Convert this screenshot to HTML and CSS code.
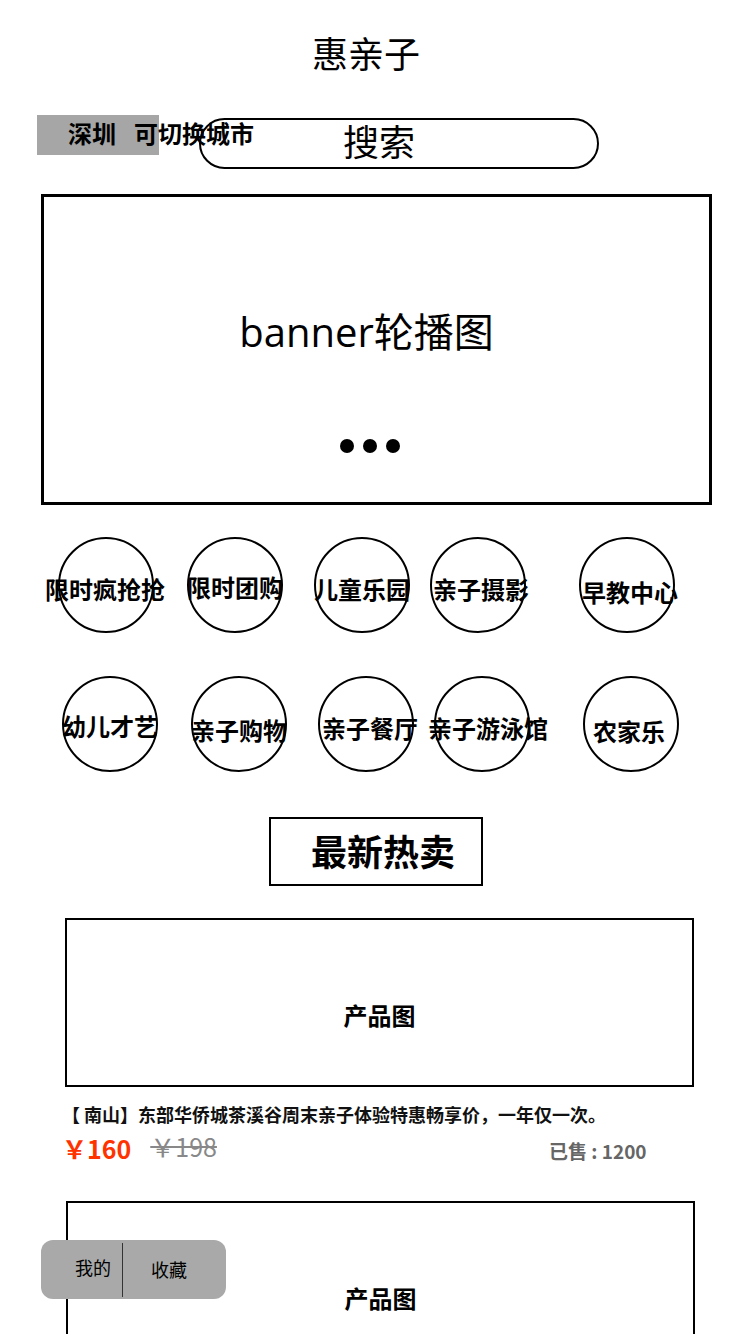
FILE: index.html
```html
<!DOCTYPE html>
<html lang="zh-CN">
<head>
<meta charset="utf-8">
<title>惠亲子</title>
<link rel="stylesheet" href="styles.css">
</head>
<body>
<div class="page">
  <header class="header">
    <h1 class="title">惠亲子</h1>
  </header>

  <div class="search-row">
    <div class="city"><span class="city-name">深圳</span><span class="city-switch">可切换城市</span></div>
    <div class="search">搜索</div>
  </div>

  <section class="banner">
    <div class="banner-text">banner轮播图</div>
    <div class="dots"><span class="dot"></span><span class="dot"></span><span class="dot"></span></div>
  </section>

  <nav class="cats">
    <div class="cat-row row1">
      <div class="cat"><span>限时疯抢抢</span></div>
      <div class="cat"><span>限时团购</span></div>
      <div class="cat"><span>儿童乐园</span></div>
      <div class="cat"><span>亲子摄影</span></div>
      <div class="cat"><span>早教中心</span></div>
    </div>
    <div class="cat-row row2">
      <div class="cat"><span>幼儿才艺</span></div>
      <div class="cat"><span>亲子购物</span></div>
      <div class="cat"><span>亲子餐厅</span></div>
      <div class="cat"><span>亲子游泳馆</span></div>
      <div class="cat"><span>农家乐</span></div>
    </div>
  </nav>

  <div class="hot-wrap">
    <div class="hot">最新热卖</div>
  </div>

  <article class="product first">
    <div class="product-img">产品图</div>
    <div class="product-title">【 南山】东部华侨城茶溪谷周末亲子体验特惠畅享价，一年仅一次。</div>
    <div class="price-row">
      <span class="price">￥160</span>
      <span class="old-price">￥198</span>
      <span class="sold">已售 : 1200</span>
    </div>
  </article>

  <article class="product second">
    <div class="product-img">产品图</div>
  </article>
</div>

<div class="float-bar">
  <div class="fb-item fb-mine">我的</div>
  <div class="fb-divider"></div>
  <div class="fb-item fb-fav">收藏</div>
</div>
</body>
</html>
```

FILE: styles.css
```css
* { box-sizing: border-box; }

html, body {
  margin: 0;
  padding: 0;
  background: #fff;
}

body {
  font-family: "Noto Sans CJK SC", "Noto Sans", sans-serif;
  color: #000;
  width: 750px;
  overflow: hidden;
}

.page {
  width: 750px;
}

/* header */
.header {
  padding-top: 27px;
  padding-right: 18px;
  text-align: center;
}
.title {
  margin: 0;
  font-size: 36px;
  font-weight: 400;
  line-height: 50px;
}

/* search row */
.search-row {
  margin-top: 38px;
  display: flex;
  align-items: flex-start;
  padding-left: 37px;
}
.city {
  position: relative;
  z-index: 2;
  width: 122px;
  height: 40px;
  background: #a6a6a6;
  padding-left: 31px;
  font-size: 24px;
  font-weight: 700;
  line-height: 36px;
  white-space: nowrap;
  overflow: visible;
}
.city-switch {
  margin-left: 18px;
}
.search {
  margin-left: 40px;
  margin-top: 3px;
  width: 400px;
  height: 51px;
  border: 2px solid #000;
  border-radius: 26px;
  font-size: 36px;
  line-height: 40px;
  text-align: center;
  padding-right: 40px;
}

/* banner */
.banner {
  margin: 25px 0 0 41px;
  width: 671px;
  height: 311px;
  border: 3px solid #000;
  display: flex;
  flex-direction: column;
  align-items: center;
  padding-top: 107px;
}
.banner-text {
  font-size: 40px;
  line-height: 56px;
  padding-right: 20px;
  font-family: "Open Sans", "Noto Sans CJK SC", sans-serif;
}
.dots {
  margin-top: 79px;
  display: flex;
  gap: 9px;
  padding-right: 13px;
}
.dot {
  width: 14px;
  height: 14px;
  border-radius: 50%;
  background: #000;
}

/* categories */
.cats {
  margin-top: 32px;
  display: flex;
  flex-direction: column;
  gap: 43px;
}
.cat-row {
  display: flex;
}
.row1 { padding-left: 58px; }
.row2 { padding-left: 62px; }
.cat {
  width: 96px;
  height: 96px;
  border: 2px solid #000;
  border-radius: 50%;
  display: flex;
  align-items: center;
  justify-content: center;
  padding-top: 6px;
  font-size: 24px;
  font-weight: 700;
  white-space: nowrap;
}
.cat:nth-child(2) { margin-left: 33px; }
.cat:nth-child(3) { margin-left: 31px; }
.cat:nth-child(4) { margin-left: 20px; }
.cat:nth-child(5) { margin-left: 53px; padding-top: 12px; }
.row1 .cat:nth-child(1) span { margin-left: -2px; }
.row1 .cat:nth-child(2) { padding-top: 2px; }
.row2 .cat:nth-child(1) { padding-top: 3px; }
.row2 .cat:nth-child(2) { padding-top: 10px; }
.row2 .cat:nth-child(4) span { margin-left: 12px; }
.row2 .cat:nth-child(5) span { margin-left: -4px; }
.row1 .cat:nth-child(4) span,
.row1 .cat:nth-child(5) span { margin-left: 6px; }
.row2 .cat:nth-child(3) span { margin-left: 8px; }

/* hot title */
.hot-wrap {
  margin-top: 45px;
  padding-left: 269px;
}
.hot {
  width: 214px;
  height: 69px;
  border: 2px solid #000;
  font-size: 36px;
  font-weight: 700;
  line-height: 63px;
  text-align: center;
  padding-left: 14px;
}

/* products */
.product.first {
  margin-top: 32px;
  padding-left: 62px;
}
.product.second {
  margin-top: 35px;
  padding-left: 66px;
}
.product-img {
  width: 629px;
  height: 169px;
  border: 2px solid #000;
  font-size: 24px;
  font-weight: 700;
  line-height: 34px;
  text-align: center;
  padding-top: 78px;
}
.first .product-img {
  margin-left: 3px;
}
.product-title {
  margin-top: 14px;
  font-size: 18px;
  font-weight: 700;
  line-height: 26px;
  color: #111;
  white-space: nowrap;
}
.price-row {
  margin-top: 3px;
  display: flex;
  align-items: center;
  height: 36px;
  padding-left: 0;
}
.price {
  color: #ff3300;
  font-size: 25px;
  font-weight: 700;
  line-height: 36px;
}
.old-price {
  margin-left: 19px;
  margin-top: -4px;
  color: #888;
  font-size: 25px;
  line-height: 36px;
  text-decoration: line-through;
  text-decoration-thickness: 2px;
}
.sold {
  margin-left: 332px;
  margin-top: 6px;
  color: #666;
  font-size: 19px;
  font-weight: 700;
  line-height: 26px;
}

/* floating bar */
.float-bar {
  position: fixed;
  left: 41px;
  bottom: 35px;
  width: 185px;
  height: 59px;
  background: #a9a9a9;
  border-radius: 12px;
  display: flex;
  align-items: center;
  z-index: 10;
}
.fb-item {
  font-size: 18px;
  line-height: 26px;
}
.fb-mine {
  width: 81px;
  padding-left: 34px;
  margin-top: -6px;
}
.fb-divider {
  width: 1px;
  height: 54px;
  background: #333;
}
.fb-fav {
  margin-left: 28px;
  margin-top: -2px;
}
```
